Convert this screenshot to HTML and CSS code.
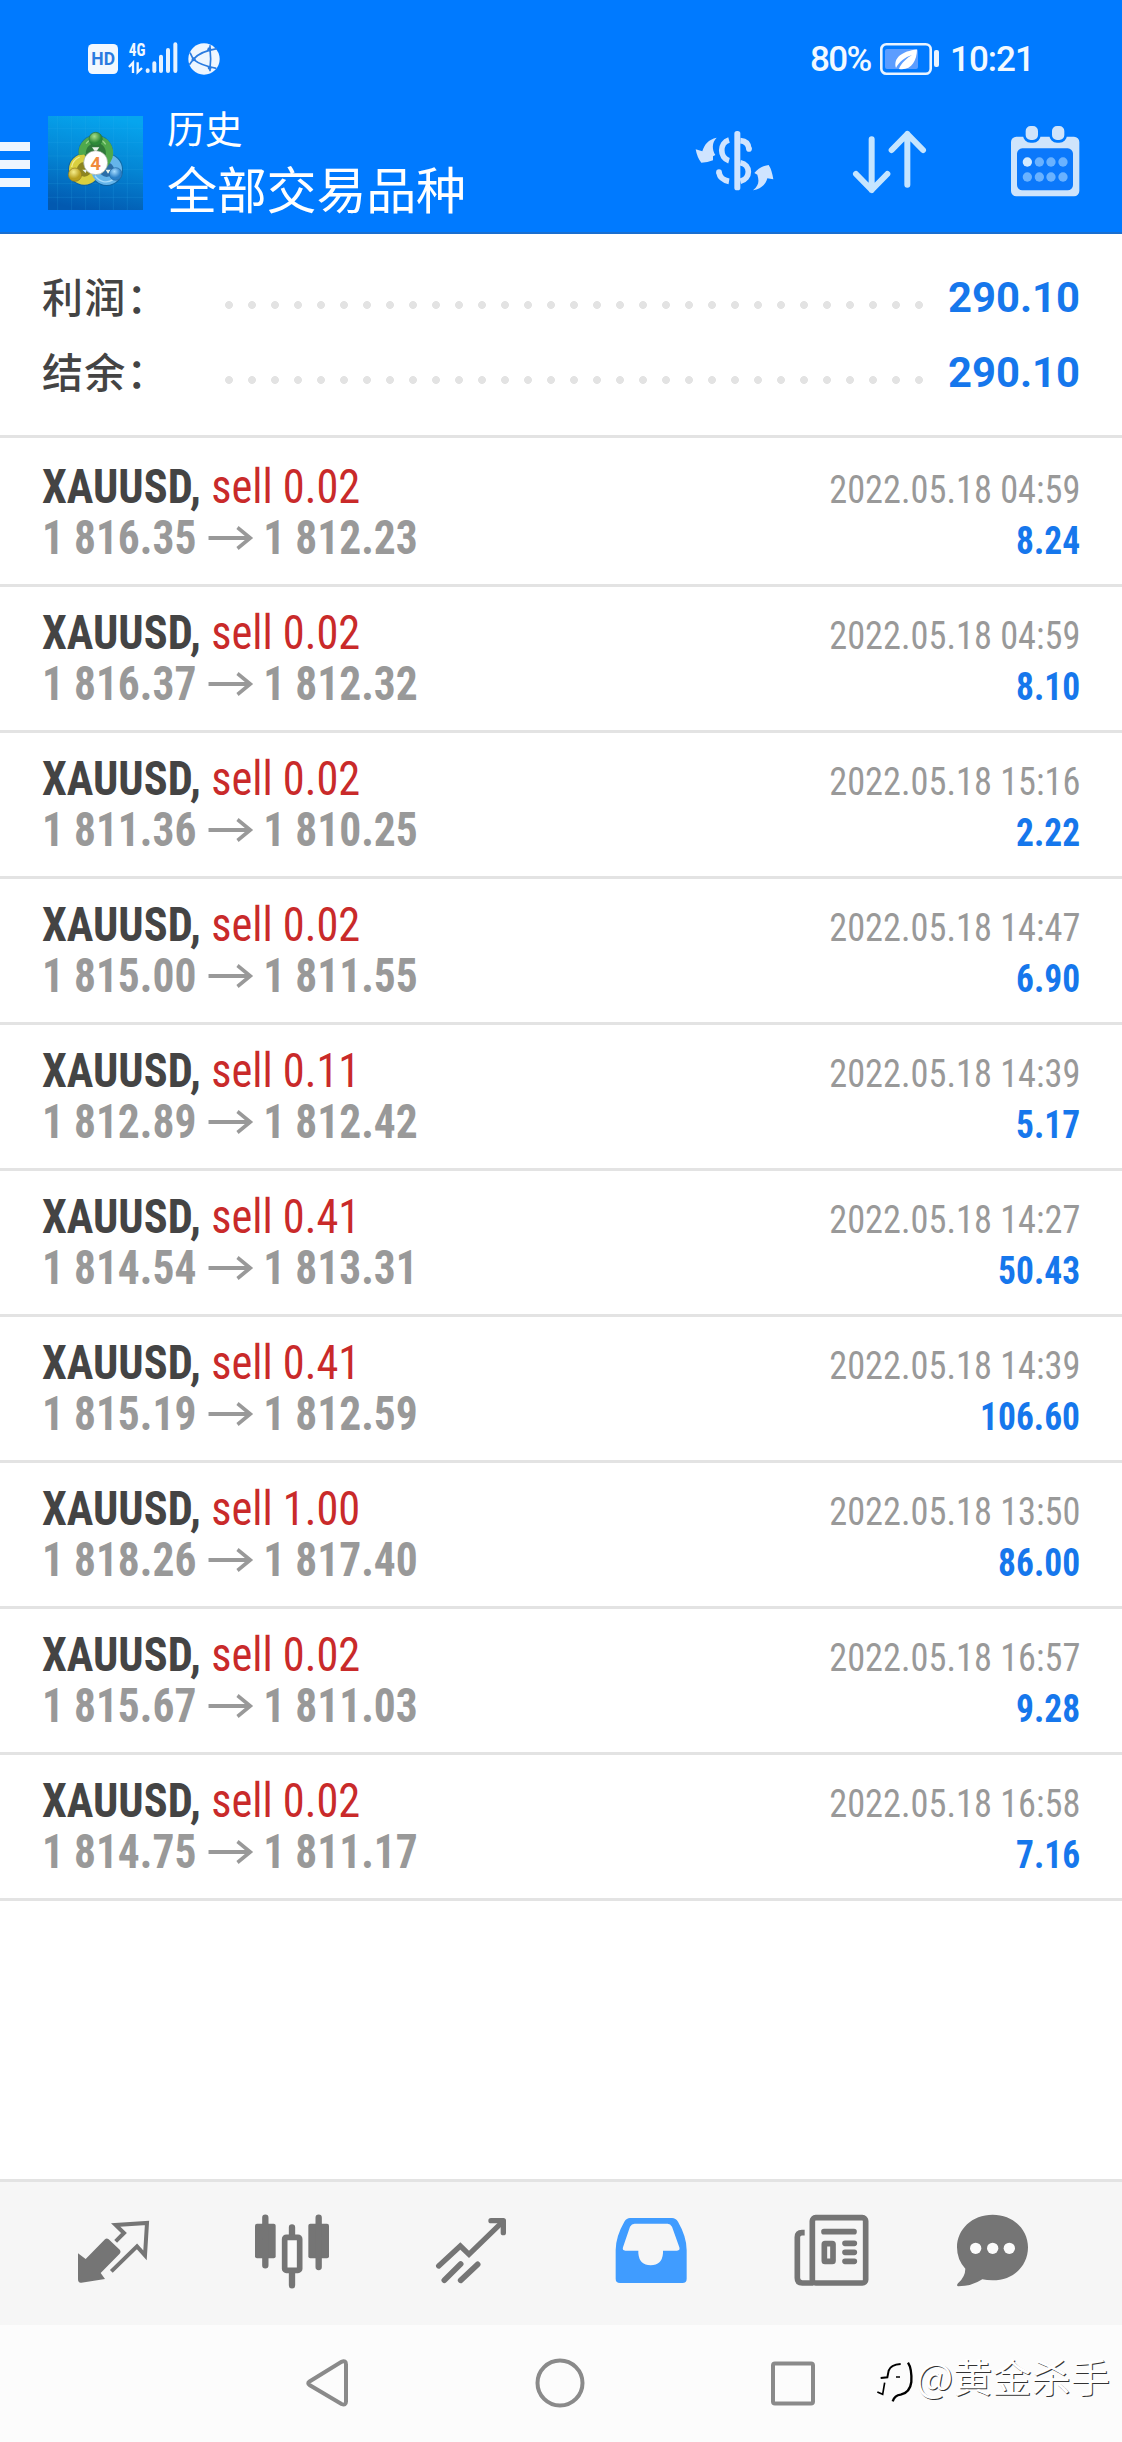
FILE: index.html
```
<!DOCTYPE html>
<html lang="zh-CN">
<head>
<meta charset="utf-8">
<title>历史</title>
<link rel="stylesheet" href="styles.css">
</head>
<body>
<div class="screen">
  <header class="header">
    <div class="status">
      <svg class="status-left" viewBox="0 0 450 150" width="150" height="50">
        <rect x="24" y="30" width="90" height="90" rx="14" fill="#f2f8ff"/>
        <text x="34" y="94" class="hd" textLength="71" lengthAdjust="spacingAndGlyphs">HD</text>
        <text x="146" y="66" class="net" textLength="50" lengthAdjust="spacingAndGlyphs">4G</text>
        <path d="M147 99L159 86V117M173 85V114L186 102" fill="none" stroke="#f2f8ff" stroke-width="7"/>
        <g stroke="#e6f2ff" stroke-width="12" stroke-linecap="round">
          <path d="M203 109V111M223 88V111M243 68V111M264 48V111M286 31V111"/>
        </g>
        <ellipse cx="372" cy="75" rx="47" ry="47" fill="#eef6ff"/>
        <g fill="none" stroke="#2a7be0" stroke-width="5">
          <path d="M340 76Q360 52 411 44M390 34V44Q394 76 390 104V112M340 76Q362 94 409 103M330 56L340 76L328 92"/>
        </g>
        <g fill="#2a7be0"><circle cx="341" cy="76" r="6"/><circle cx="388" cy="46" r="6"/><circle cx="389" cy="101" r="6"/></g>
      </svg>
      <div class="status-right">
        <span class="pct">80%</span>
        <svg class="battery" viewBox="0 0 60 32" width="60" height="32">
          <rect x="1.3" y="1.3" width="49.4" height="29.4" rx="5" fill="none" stroke="#eaf4ff" stroke-width="2.6"/>
          <rect x="5" y="6" width="33" height="20" rx="2" fill="#5c9dff"/>
          <path d="M16 25C13 15 22 8 37 6.500C37 18 31 28 19 26C21 20 27 15 32 12C25 14 19 19 16 25Z" fill="#fff"/>
          <rect x="54" y="7" width="5" height="17" rx="2" fill="#eaf4ff"/>
        </svg>
        <span class="time">10:21</span>
      </div>
    </div>
    <div class="bar">
      <div class="menu"><i></i><i></i><i></i></div>
      <svg class="logo" viewBox="55 47 285 282" width="95" height="94">
        <defs>
          <linearGradient id="bg" x1="0.600" y1="0" x2="0.400" y2="1"><stop offset="0" stop-color="#06a5ee"/><stop offset="0.500" stop-color="#0485d4"/><stop offset="1" stop-color="#0259b0"/></linearGradient>
          <radialGradient id="gr" cx="0.400" cy="0.300"><stop offset="0" stop-color="#a9e08a"/><stop offset="1" stop-color="#2d8a38"/></radialGradient>
          <radialGradient id="ye" cx="0.400" cy="0.300"><stop offset="0" stop-color="#f6ee8c"/><stop offset="1" stop-color="#b9a01e"/></radialGradient>
          <radialGradient id="bl" cx="0.400" cy="0.300"><stop offset="0" stop-color="#a6dcff"/><stop offset="1" stop-color="#2a80c8"/></radialGradient>
        </defs>
        <rect x="55" y="47" width="285" height="282" fill="url(#bg)"/>
        <path d="M55 84H340M55 126H340M55 167H340M55 208H340M55 250H340M55 291H340M84 47V329M126 47V329M168 47V329M210 47V329M251 47V329M293 47V329" stroke="#35b4ee" stroke-opacity="0.350" stroke-width="1.500"/>
        <g fill="#17507c" opacity="0.500">
          <circle cx="198" cy="155" r="52"/><circle cx="164" cy="207" r="49"/><circle cx="231" cy="208" r="49"/>
        </g>
        <circle cx="164" cy="207" r="34" fill="#8c8420" stroke="#d9cf3f" stroke-width="24"/>
        <circle cx="231" cy="208" r="34" fill="#2b6ea8" stroke="#65b5ea" stroke-width="24"/>
        <circle cx="198" cy="150" r="36" fill="#2f7a3a"/>
        <path d="M158 163A41 41 0 1 1 233 180L212 208" fill="none" stroke="#4fa94c" stroke-width="22"/>
        <path d="M169 130A36 36 0 0 1 228 132" fill="none" stroke="#9ad68c" stroke-width="4"/>
        <path d="M126 200A39 39 0 0 1 150 170" fill="none" stroke="#f2ec8d" stroke-width="4"/>
        <path d="M196 226A38 38 0 0 0 250 238" fill="none" stroke="#a7dcfa" stroke-width="4"/>
        <path d="M187 141H209L201 152H195ZM158 208H172L168 218ZM228 208H244L235 220Z" fill="#e9f3ea"/>
        <circle cx="198" cy="116" r="20" fill="url(#gr)" stroke="#2b7338" stroke-width="2"/>
        <circle cx="136" cy="223" r="20" fill="url(#ye)" stroke="#8e7b20" stroke-width="2"/>
        <circle cx="258" cy="221" r="19" fill="url(#bl)" stroke="#246aa5" stroke-width="2"/>
        <circle cx="198" cy="187" r="36" fill="#fff" stroke="#9aa89a" stroke-width="2"/>
        <text x="198" y="208" class="four">4</text>
      </svg>
      <div class="titles">
        <div class="title">历史</div>
        <div class="subtitle">全部交易品种</div>
      </div>
      <div class="tools">
        <svg viewBox="0 0 300 300" width="100" height="100">
          <g fill="#cfe4ff">
            <path d="M80 83C65 98 66 118 76 135L69 139L69 151Q53 158 34 158Q22 145 17 118L37 124C43 104 55 88 80 83Z"/>
            <path d="M189 241C207 226 208 214 202 194L193 189Q210 168 236 165Q245 178 250 208L232 205C228 222 215 237 189 241Z"/>
            <rect x="133" y="63" width="18" height="178" rx="8"/>
          </g>
          <path d="M117 90C88 98 88 144 117 152M151 92C166 93 176 102 177 118M151 158C183 164 183 206 151 214M87 186C88 200 99 211 117 214" fill="none" stroke="#cfe4ff" stroke-width="17"/>
          <circle cx="177" cy="117" r="8.500" fill="#cfe4ff"/><circle cx="87" cy="186" r="8.500" fill="#cfe4ff"/>
        </svg>
        <svg viewBox="450 0 300 300" width="100" height="100">
          <path d="M545 88V240M498 192L545 240L592 192M652 224V72M605 120L652 72L699 120" fill="none" stroke="#c5e5ff" stroke-width="18" stroke-linecap="round" stroke-linejoin="round"/>
        </svg>
        <svg viewBox="930 0 270 300" width="90" height="100">
          <rect x="963" y="80" width="205" height="179" rx="16" fill="#cfe4fb"/>
          <rect x="981" y="115" width="168" height="126" rx="16" fill="#0b78fb"/>
          <g fill="#cfe4fb" stroke="#007aff" stroke-width="8"><rect x="1003" y="44" width="45" height="50" rx="19"/><rect x="1082" y="44" width="45" height="50" rx="19"/></g>
          <g fill="#6ab2ff"><circle cx="1012" cy="156" r="14" fill="#d3eaff"/><circle cx="1048" cy="156" r="14"/><circle cx="1083" cy="156" r="14"/><circle cx="1119" cy="156" r="14"/><circle cx="1012" cy="201" r="14"/><circle cx="1048" cy="201" r="14"/><circle cx="1083" cy="201" r="14"/><circle cx="1119" cy="201" r="14"/></g>
        </svg>
      </div>
    </div>
  </header>

  <section class="summary">
    <div class="sum-row"><span class="label">利润：</span><span class="dots"></span><span class="total">290.10</span></div>
    <div class="sum-row"><span class="label">结余：</span><span class="dots"></span><span class="total">290.10</span></div>
  </section>

  <main class="deals">
    <div class="deal">
      <div class="line"><span class="name"><b>XAUUSD,</b> <span class="side">sell 0.02</span></span><span class="date">2022.05.18 04:59</span></div>
      <div class="line"><span class="price">1 816.35<svg class="arrow" viewBox="0 0 48 24" width="48" height="24"><path d="M0 12H46M32 1.500L46 12L32 22.500"/></svg>1 812.23</span><span class="profit">8.24</span></div>
    </div>
    <div class="deal">
      <div class="line"><span class="name"><b>XAUUSD,</b> <span class="side">sell 0.02</span></span><span class="date">2022.05.18 04:59</span></div>
      <div class="line"><span class="price">1 816.37<svg class="arrow" viewBox="0 0 48 24" width="48" height="24"><path d="M0 12H46M32 1.500L46 12L32 22.500"/></svg>1 812.32</span><span class="profit">8.10</span></div>
    </div>
    <div class="deal">
      <div class="line"><span class="name"><b>XAUUSD,</b> <span class="side">sell 0.02</span></span><span class="date">2022.05.18 15:16</span></div>
      <div class="line"><span class="price">1 811.36<svg class="arrow" viewBox="0 0 48 24" width="48" height="24"><path d="M0 12H46M32 1.500L46 12L32 22.500"/></svg>1 810.25</span><span class="profit">2.22</span></div>
    </div>
    <div class="deal">
      <div class="line"><span class="name"><b>XAUUSD,</b> <span class="side">sell 0.02</span></span><span class="date">2022.05.18 14:47</span></div>
      <div class="line"><span class="price">1 815.00<svg class="arrow" viewBox="0 0 48 24" width="48" height="24"><path d="M0 12H46M32 1.500L46 12L32 22.500"/></svg>1 811.55</span><span class="profit">6.90</span></div>
    </div>
    <div class="deal">
      <div class="line"><span class="name"><b>XAUUSD,</b> <span class="side">sell 0.11</span></span><span class="date">2022.05.18 14:39</span></div>
      <div class="line"><span class="price">1 812.89<svg class="arrow" viewBox="0 0 48 24" width="48" height="24"><path d="M0 12H46M32 1.500L46 12L32 22.500"/></svg>1 812.42</span><span class="profit">5.17</span></div>
    </div>
    <div class="deal">
      <div class="line"><span class="name"><b>XAUUSD,</b> <span class="side">sell 0.41</span></span><span class="date">2022.05.18 14:27</span></div>
      <div class="line"><span class="price">1 814.54<svg class="arrow" viewBox="0 0 48 24" width="48" height="24"><path d="M0 12H46M32 1.500L46 12L32 22.500"/></svg>1 813.31</span><span class="profit">50.43</span></div>
    </div>
    <div class="deal">
      <div class="line"><span class="name"><b>XAUUSD,</b> <span class="side">sell 0.41</span></span><span class="date">2022.05.18 14:39</span></div>
      <div class="line"><span class="price">1 815.19<svg class="arrow" viewBox="0 0 48 24" width="48" height="24"><path d="M0 12H46M32 1.500L46 12L32 22.500"/></svg>1 812.59</span><span class="profit">106.60</span></div>
    </div>
    <div class="deal">
      <div class="line"><span class="name"><b>XAUUSD,</b> <span class="side">sell 1.00</span></span><span class="date">2022.05.18 13:50</span></div>
      <div class="line"><span class="price">1 818.26<svg class="arrow" viewBox="0 0 48 24" width="48" height="24"><path d="M0 12H46M32 1.500L46 12L32 22.500"/></svg>1 817.40</span><span class="profit">86.00</span></div>
    </div>
    <div class="deal">
      <div class="line"><span class="name"><b>XAUUSD,</b> <span class="side">sell 0.02</span></span><span class="date">2022.05.18 16:57</span></div>
      <div class="line"><span class="price">1 815.67<svg class="arrow" viewBox="0 0 48 24" width="48" height="24"><path d="M0 12H46M32 1.500L46 12L32 22.500"/></svg>1 811.03</span><span class="profit">9.28</span></div>
    </div>
    <div class="deal">
      <div class="line"><span class="name"><b>XAUUSD,</b> <span class="side">sell 0.02</span></span><span class="date">2022.05.18 16:58</span></div>
      <div class="line"><span class="price">1 814.75<svg class="arrow" viewBox="0 0 48 24" width="48" height="24"><path d="M0 12H46M32 1.500L46 12L32 22.500"/></svg>1 811.17</span><span class="profit">7.16</span></div>
    </div>
  </main>

  <nav class="tabs">
    <svg viewBox="0 0 510 330" width="170" height="110">
      <path d="M54 160L77 177L135 118Q140 113 146 118L180 150Q184 156 179 161L122 219L135 237L64 248Q54 249 54 238Z" fill="#757575"/>
      <path d="M167 124L192 99L167 75L261 69L255 166L231 139L154 214" fill="none" stroke="#757575" stroke-width="12"/>
    </svg>
    <svg viewBox="510 0 540 330" width="180" height="110">
      <g fill="#757575"><rect x="585" y="71" width="62" height="104" rx="6"/><rect x="745" y="71" width="62" height="104" rx="6"/></g>
      <path d="M616 53V196M776 53V201M696 82V108M696 215V256" stroke="#757575" stroke-width="19" stroke-linecap="round"/>
      <rect x="674" y="112" width="45" height="99" rx="5" fill="#fafafa" stroke="#757575" stroke-width="17"/>
    </svg>
    <svg viewBox="1050 0 540 330" width="180" height="110">
      <path d="M1136 198L1201 138L1227 163L1329 64" fill="none" stroke="#757575" stroke-width="16" stroke-linecap="round"/>
      <path d="M1293 62H1330V98" fill="none" stroke="#757575" stroke-width="16" stroke-linecap="round" stroke-linejoin="round"/>
      <path d="M1153 241L1202 192M1202 241L1253 193" fill="none" stroke="#757575" stroke-width="17" stroke-linecap="round"/>
    </svg>
    <svg viewBox="-30 0 540 330" width="180" height="110">
      <path d="M90 54H216Q227 54 234 65Q260 110 260 150V236Q260 249 247 249H60Q47 249 47 236V150Q47 110 73 65Q80 54 90 54ZM104 71Q95 71 90 80L69 142Q66 152 76 152H115V160Q118 196 152 196Q186 196 189 160V152H231Q241 152 238 142L216 80Q211 71 203 71Z" fill="#409cff"/>
    </svg>
    <svg viewBox="510 0 510 330" width="170" height="110">
      <g fill="none" stroke="#757575" stroke-width="17">
        <rect x="637" y="53" width="160" height="196" rx="10"/>
        <path d="M614 98H606Q592 98 592 112V234Q592 249 607 249H640"/>
        <path d="M672 95H762M735 130H763M735 157H763M735 184H763" stroke-linecap="round"/>
        <rect x="673" y="131" width="26" height="53" rx="2"/>
      </g>
    </svg>
    <svg viewBox="1020 0 360 330" width="120" height="110">
      <path d="M1178 44C1240 44 1284 88 1284 142C1284 198 1240 241 1178 241Q1160 241 1147 238Q1115 259 1075 259Q1068 258 1074 250Q1096 230 1096 206Q1071 180 1071 142C1071 88 1116 44 1178 44Z" fill="#757575"/>
      <g fill="#fbfbfb"><circle cx="1127" cy="145" r="17"/><circle cx="1178" cy="145" r="17"/><circle cx="1228" cy="145" r="17"/></g>
    </svg>
  </nav>

  <footer class="sysnav">
    <svg viewBox="0 0 52 56" width="52" height="56"><path d="M7.500 26.500L39.500 6.800Q44 5 44 9.500V46.500Q44 51 39.500 49L7.500 30Q5 28 7.500 26.500Z"/></svg>
    <svg viewBox="0 0 56 56" width="56" height="56"><circle cx="28" cy="28" r="22.500"/></svg>
    <svg viewBox="0 0 56 56" width="56" height="56"><rect x="8" y="8.500" width="40" height="40" rx="2"/></svg>
    <div class="watermark">
      <svg viewBox="0 0 120 150" width="40" height="50">
        <path d="M32 108L52 106L56 86Q62 68 92 66" fill="none" stroke="#000" stroke-width="6"/>
        <path d="M22 150L38 157L44 122M78 105H90" fill="none" stroke="#000" stroke-width="5"/>
        <path d="M114 62Q126 80 124 120Q120 152 92 158Q74 160 68 178" fill="none" stroke="#000" stroke-width="7"/>
      </svg><span>@黄金杀手</span>
    </div>
  </footer>
</div>
</body>
</html>
```
FILE: styles.css
```
* { box-sizing: border-box; }
body { margin: 0; background: #fff; font-family: Roboto, "Noto Sans CJK SC", sans-serif; }
svg { display: block; flex: none; overflow: visible; }
.screen { width: 1122px; height: 2442px; display: flex; flex-direction: column; overflow: hidden; }

.header { height: 234px; flex: none; background: #007aff; border-bottom: 2px solid #1a6fd0; }
.status { height: 101px; display: flex; justify-content: space-between; padding: 34px 90px 0 80px; color: #f2f9ff; }
.status-right { display: flex; align-items: flex-start; height: 50px; padding-top: 9px; }
.pct, .time { font-size: 35px; line-height: 34px; font-weight: 500; white-space: nowrap; }
.pct { width: 70px; letter-spacing: -1.6px; }
.time { width: 82px; margin-left: 10px; letter-spacing: -1px; }
.hd { font: 700 56px Roboto, sans-serif; fill: #2a7be0; }
.net { font: 700 54px "Roboto Condensed", sans-serif; fill: #f2f8ff; }
.bar { display: flex; height: 131px; }
.menu { width: 30px; margin: 41px 18px 0 0; display: flex; flex-direction: column; gap: 9.5px; }
.menu i { height: 8.500px; background: #eef6ff; }
.logo { margin-top: 15px; }
.four { font: 700 56px Roboto, sans-serif; fill: #f08a3c; text-anchor: middle; }
.titles { margin-left: 24px; width: 523px; color: #fff; font-family: "Noto Sans CJK SC", sans-serif; }
.title { font-size: 37.800px; line-height: 52px; }
.subtitle { font-size: 50px; line-height: 69px; letter-spacing: -0.2px; }
.tools { display: flex; padding-top: 9px; }
.tools svg:nth-child(2) { margin-left: 50px; }
.tools svg:nth-child(3) { margin-left: 60px; }

.summary { height: 204px; flex: none; padding: 22px 42px 0 42px; border-bottom: 3px solid #e3e3e3; }
.sum-row { height: 75px; display: flex; align-items: flex-start; line-height: 75px; }
.label { width: 181px; padding-top: 2px; font-family: "Noto Sans CJK SC", sans-serif; font-size: 41px; letter-spacing: 1.200px; font-weight: 500; color: #444; }
.dots { width: 713px; height: 75px; background: radial-gradient(circle 4px at 6px 49px, #e3e3e3 0, #e3e3e3 3.600px, transparent 4.200px) repeat-x; background-size: 23px 75px; }
.total { flex: 1; padding-top: 4px; text-align: right; font-size: 41.800px; font-weight: 700; color: #1677ec; white-space: nowrap; }

.deals { flex: 1; padding-top: 3px; font-family: "Roboto Condensed", Roboto, sans-serif; }
.deal { height: 146px; padding: 20px 42px 0; border-bottom: 3px solid #e3e3e3; }
.line { display: flex; justify-content: space-between; align-items: baseline; height: 51px; line-height: 51px; white-space: nowrap; }
.name { font-size: 48px; transform: scaleX(0.925); transform-origin: left; }
.name b { color: #444; }
.side { color: #c92a2a; }
.price { font-size: 48px; font-weight: 700; color: #999; transform: scaleX(0.905); transform-origin: left; }
.arrow { display: inline-block; margin: 0 13px; vertical-align: 4px; fill: none; stroke: #999; stroke-width: 4; }
.date, .profit { font-size: 39.400px; transform: scaleX(0.922); transform-origin: right; }
.date { color: #999; }
.profit { font-weight: 700; color: #1677ec; transform: scaleX(0.9); }

.tabs { height: 146px; flex: none; display: flex; padding: 18px 0 0 60px; background: #f6f6f6; border-top: 3px solid #e3e3e3; }
.sysnav { position: relative; height: 117px; flex: none; display: flex; padding: 30px 0 0 302px; background: #fcfcfc; }
.sysnav > svg { fill: none; stroke: #8a8a8a; stroke-width: 4; }
.sysnav > svg:nth-child(2) { margin-left: 178px; }
.sysnav > svg:nth-child(3) { margin-left: 177px; }
.watermark { position: absolute; left: 870px; top: 17px; display: flex; font-family: "Noto Sans CJK SC", sans-serif; font-size: 39.200px; line-height: 66px; color: #fff; text-shadow: 1px 1px 0 #333; white-space: nowrap; }
.watermark span { margin-left: 6px; }
```
